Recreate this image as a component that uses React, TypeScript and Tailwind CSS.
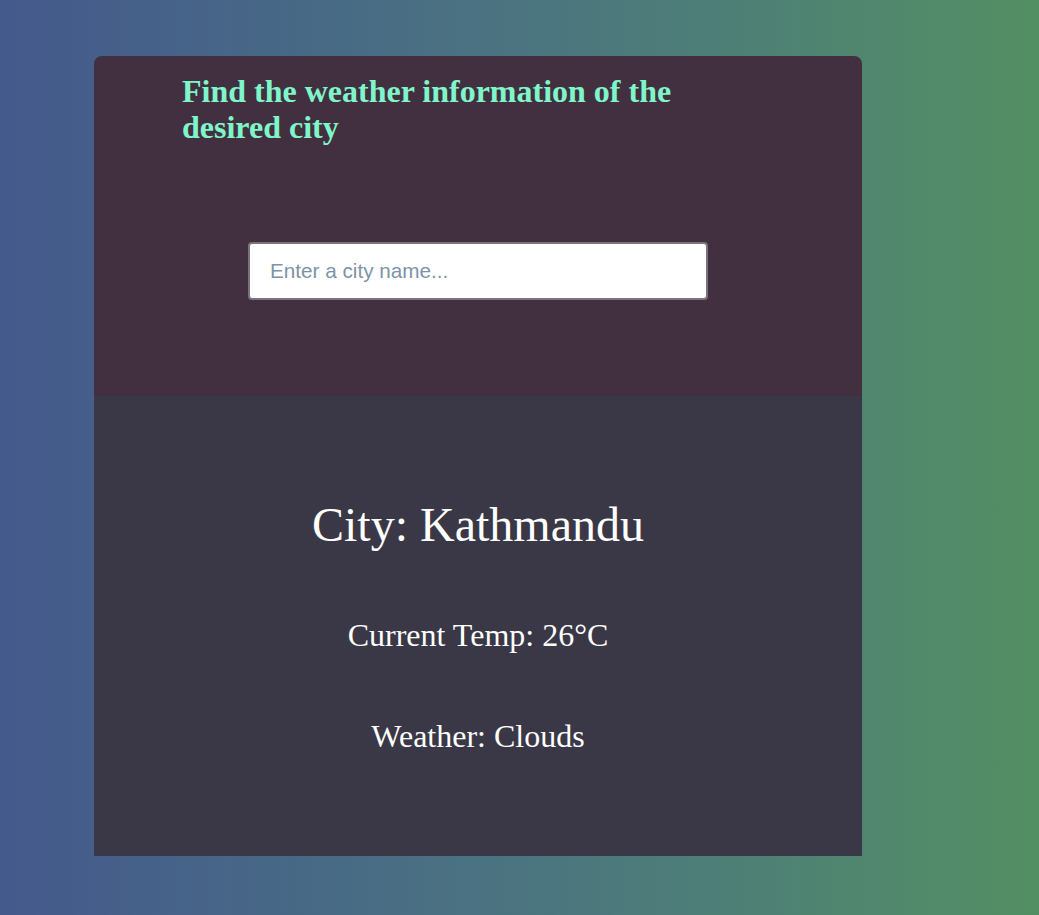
import { useState } from "react";

const serif = "font-['Liberation_Serif','Times_New_Roman',serif]";

export default function App() {
  const [city, setCity] = useState("");

  return (
    <div className="min-h-screen w-full bg-linear-to-r from-[#44598c] via-[#4b7480] to-[#538f63] pt-[56px] pl-[94px]">
      <div className="w-[768px] overflow-hidden rounded-t-lg">
        {/* Search panel */}
        <div className="h-[340px] bg-[#422f40] pt-[17px]">
          <h1
            className={`${serif} ml-[88px] max-w-[540px] text-[32px] font-bold leading-[1.14] text-[#7ff6c9]`}
          >
            Find the weather information of the desired city
          </h1>
          <div className="mt-[96px] flex justify-center">
            <input
              value={city}
              onChange={(e) => setCity(e.target.value)}
              placeholder="Enter a city name..."
              className="h-[58px] w-[460px] rounded border-2 border-[#7a757c] bg-white px-[20px] font-['Liberation_Sans',Arial,sans-serif] text-[20.7px] text-gray-800 outline-none placeholder:text-[#7d93a8]"
            />
          </div>
        </div>

        {/* Result panel */}
        <div className={`${serif} h-[460px] bg-[#3a3846] pt-[103px] text-center text-white`}>
          <h2 className="text-[48px] leading-[1.1]">City: Kathmandu</h2>
          <p className="mt-[66px] text-[32px] leading-[1.1]">Current Temp: 26°C</p>
          <p className="mt-[66px] text-[32px] leading-[1.1]">Weather: Clouds</p>
        </div>
      </div>
    </div>
  );
}
